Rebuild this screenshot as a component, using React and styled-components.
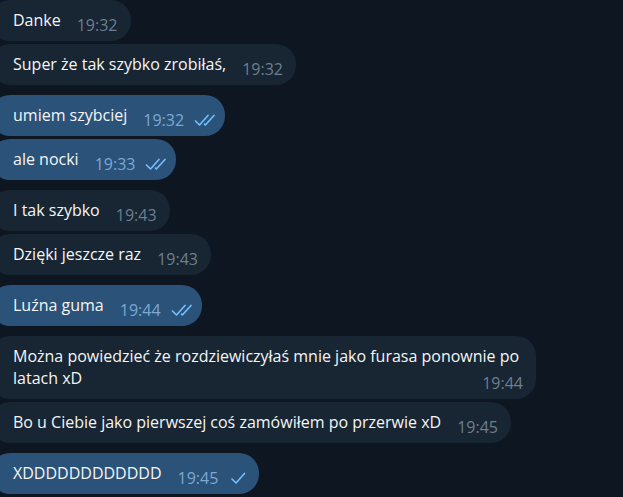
import React from "react";
import styled, { createGlobalStyle } from "styled-components";

const Global = createGlobalStyle`
  html, body { margin: 0; padding: 0; background: #0e1621; overflow: hidden; }
  body { font-family: "Open Sans", "Noto Sans", sans-serif; }
`;

const Chat = styled.div`
  width: 623px;
  height: 497px;
  background: #0e1621;
  display: flex;
  flex-direction: column;
  overflow: hidden;
`;

const Row = styled.div`
  display: flex;
  margin-top: ${(p) => (p.$first ? "0" : p.$newGroup ? "10px" : "3px")};
`;

const Bubble = styled.div`
  display: flow-root;
  margin-left: -10px;
  padding: 9px ${(p) => (p.$out ? "9px" : "13px")} 10px 23px;
  max-width: 510px;
  border-radius: 20px;
  background: ${(p) => (p.$out ? "#2b5278" : "#182533")};
  color: #f5f5f5;
  font-size: 16px;
  line-height: 22px;
`;

const Meta = styled.span`
  float: right;
  display: flex;
  align-items: center;
  margin-left: 16px;
  gap: 10px;
  height: 22px;
  position: relative;
  top: 5px;
  font-size: 16px;
  color: ${(p) => (p.$out ? "#7da8d3" : "#6d7f8f")};
`;

const Ticks = ({ double }) => (
  <svg width="22" height="13" viewBox="0 0 22 13" style={{ display: "block" }}>
    {double ? (
      <>
        <path d="M1.5 7 L5.5 11 L14 1.5" fill="none" stroke="#72bcfd" strokeWidth="1.7" strokeLinecap="round" strokeLinejoin="round" />
        <path d="M10.5 10.2 L11.3 11 L20 1.5" fill="none" stroke="#72bcfd" strokeWidth="1.7" strokeLinecap="round" strokeLinejoin="round" />
      </>
    ) : (
      <path d="M4 7 L8 11 L16.5 1.5" fill="none" stroke="#72bcfd" strokeWidth="1.7" strokeLinecap="round" strokeLinejoin="round" />
    )}
  </svg>
);

const messages = [
  { t: "Danke", time: "19:32" },
  { t: "Super że tak szybko zrobiłaś,", time: "19:32" },
  { t: "umiem szybciej", time: "19:32", out: true, ticks: 2 },
  { t: "ale nocki", time: "19:33", out: true, ticks: 2 },
  { t: "I tak szybko", time: "19:43" },
  { t: "Dzięki jeszcze raz", time: "19:43" },
  { t: "Luźna guma", time: "19:44", out: true, ticks: 2 },
  { t: "Można powiedzieć że rozdziewiczyłaś mnie jako furasa ponownie po latach xD", time: "19:44" },
  { t: "Bo u Ciebie jako pierwszej coś zamówiłem po przerwie xD", time: "19:45" },
  { t: "XDDDDDDDDDDDD", time: "19:45", out: true, ticks: 1 },
];

export default function App() {
  return (
    <>
      <Global />
      <Chat>
        {messages.map((m, i) => {
          const prev = messages[i - 1];
          const newGroup = prev && !!prev.out !== !!m.out;
          return (
            <Row key={i} $first={i === 0} $newGroup={newGroup}>
              <Bubble $out={m.out}>
                {m.t}
                <Meta $out={m.out}>
                  <span>{m.time}</span>
                  {m.ticks ? <Ticks double={m.ticks === 2} /> : null}
                </Meta>
              </Bubble>
            </Row>
          );
        })}
      </Chat>
    </>
  );
}
